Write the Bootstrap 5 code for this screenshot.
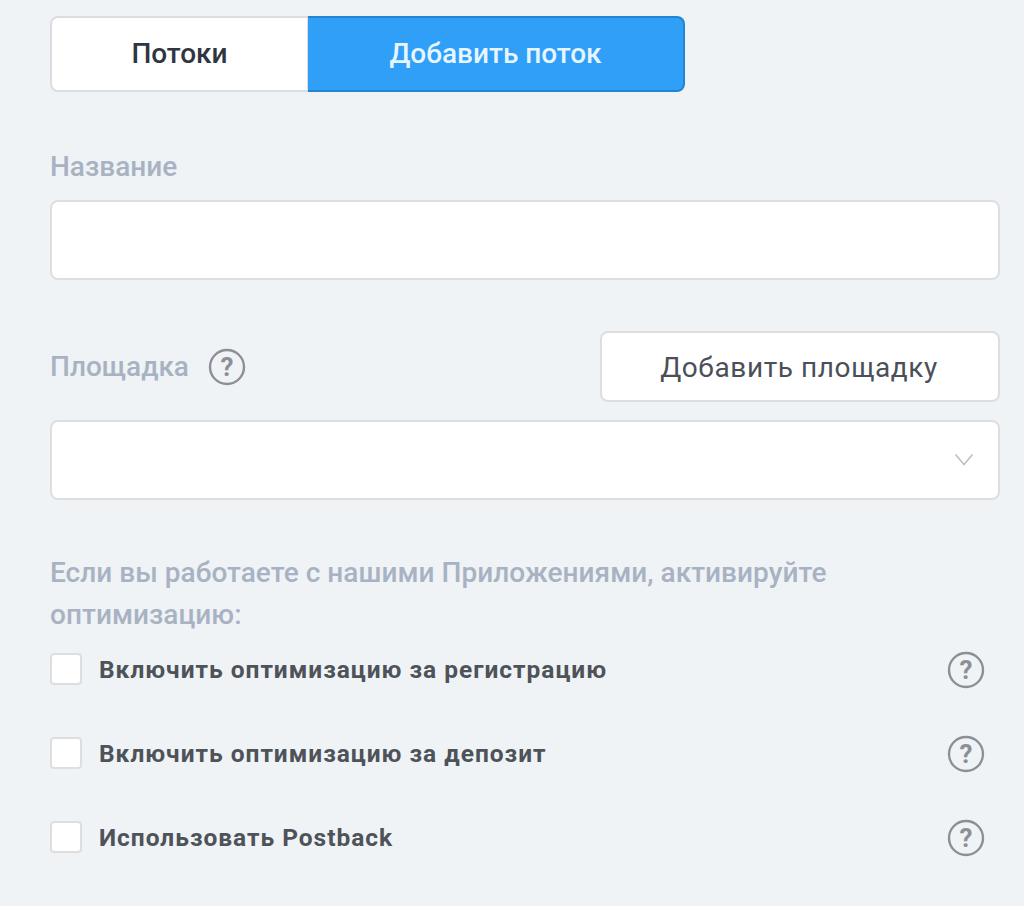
<!DOCTYPE html>
<html lang="ru">
<head>
<meta charset="utf-8">
<title>Поток</title>
<link href="https://cdn.jsdelivr.net/npm/bootstrap@5.3.0/dist/css/bootstrap.min.css" rel="stylesheet">
<style>
html,body{height:906px;overflow:hidden}
body{background:#eff3f6;font-family:Roboto,"Liberation Sans",sans-serif;}
.page-wrap{padding:16px 24px 0 50px}
.tab-bar{width:635px;height:76px}
.tab-item{font-size:28px;line-height:1;display:flex;align-items:center;justify-content:center;font-weight:500;height:76px;padding:0}
.tab-plain{width:258px;background:#fff;color:#2f3642;border:2px solid #dcdde0;border-right:1px solid #dcdde0;border-radius:8px 0 0 8px}
.tab-active{width:377px;background:#2f9ff8;color:#e6f5ff;border:2px solid #2384cf;border-left:0;border-radius:0 8px 8px 0}
.tab-plain:hover{background:#fff;color:#2f3642;border-color:#dcdde0}
.tab-active:hover{background:#2f9ff8;color:#e6f5ff;border-color:#2384cf}
.field-label{font-size:28px;line-height:32px;color:#a8b2c2;font-weight:500;margin:0}
.field-box{height:80px;border:2px solid #dddee0;border-radius:8px;background-color:#fff;box-shadow:none}
.name-label{margin-top:59px;margin-bottom:17px}
.site-row{margin-top:51px;height:71px}
.add-site{width:400px;height:71px;background:#fff;border:2px solid #dddee0;border-radius:8px;font-size:28px;letter-spacing:.6px;color:#4b5058;padding:3px 2px 0 0;font-weight:400}
.add-site:hover{background:#fff;color:#4b5058;border-color:#dddee0}
.site-select{margin-top:18px;background-image:none;position:relative}
.select-arrow{position:absolute;right:24px;top:31px}
.hint-text{margin-top:52px;font-size:28px;line-height:42px;color:#a8b2c2;font-weight:500;letter-spacing:.03px}
.opt-list{margin-top:-18px}
.opt-row{height:84px;padding-top:17px;padding-right:15px}
.opt-check{width:32px;height:32px;margin:0;border:2px solid #dddee0;border-radius:5px;background:#fff;flex:none}
.opt-text{font-size:24.5px;line-height:32px;font-weight:700;color:#4e5259;margin-left:17px;letter-spacing:.98px;white-space:nowrap;padding-top:3px}
.help-ic{width:38px;height:38px;flex:none;display:block}
.opt-row .help-ic{margin-top:2px}
.help-ic circle{fill:none;stroke:#8c9096;stroke-width:2.4}
.help-ic text{fill:#8c9096;font-family:Roboto,"Liberation Sans",sans-serif;font-size:26px;font-weight:700}
.label-help{margin-left:19px}
</style>
</head>
<body>
<div class="page-wrap">
  <div class="d-flex tab-bar">
    <button type="button" class="btn tab-item tab-plain">Потоки</button>
    <button type="button" class="btn tab-item tab-active">Добавить поток</button>
  </div>

  <p class="field-label name-label">Название</p>
  <div class="field-box"></div>

  <div class="d-flex align-items-center justify-content-between site-row">
    <div class="d-flex align-items-center">
      <span class="field-label">Площадка</span>
      <svg class="help-ic label-help" viewBox="0 0 38 38" aria-hidden="true"><circle cx="19" cy="19" r="17"/><text x="19" y="28" text-anchor="middle">?</text></svg>
    </div>
    <button type="button" class="btn add-site">Добавить площадку</button>
  </div>

  <div class="field-box site-select">
    <svg class="select-arrow" width="20" height="13" viewBox="0 0 20 13" aria-hidden="true"><path d="M1.5 1.5 10 11.5 18.5 1.5" fill="none" stroke="#bcc0c6" stroke-width="1.6"/></svg>
  </div>

  <p class="hint-text mb-0">Если вы работаете с нашими Приложениями, активируйте<br>оптимизацию:</p>

  <div class="opt-list">
    <div class="d-flex align-items-center justify-content-between opt-row">
      <label class="d-flex align-items-center"><input class="form-check-input opt-check" type="checkbox"><span class="opt-text">Включить оптимизацию за регистрацию</span></label>
      <svg class="help-ic" viewBox="0 0 38 38" aria-hidden="true"><circle cx="19" cy="19" r="17"/><text x="19" y="28" text-anchor="middle">?</text></svg>
    </div>
    <div class="d-flex align-items-center justify-content-between opt-row">
      <label class="d-flex align-items-center"><input class="form-check-input opt-check" type="checkbox"><span class="opt-text">Включить оптимизацию за депозит</span></label>
      <svg class="help-ic" viewBox="0 0 38 38" aria-hidden="true"><circle cx="19" cy="19" r="17"/><text x="19" y="28" text-anchor="middle">?</text></svg>
    </div>
    <div class="d-flex align-items-center justify-content-between opt-row">
      <label class="d-flex align-items-center"><input class="form-check-input opt-check" type="checkbox"><span class="opt-text">Использовать Postback</span></label>
      <svg class="help-ic" viewBox="0 0 38 38" aria-hidden="true"><circle cx="19" cy="19" r="17"/><text x="19" y="28" text-anchor="middle">?</text></svg>
    </div>
  </div>
</div>
<script src="https://cdn.jsdelivr.net/npm/bootstrap@5.3.0/dist/js/bootstrap.bundle.min.js"></script>
</body>
</html>
